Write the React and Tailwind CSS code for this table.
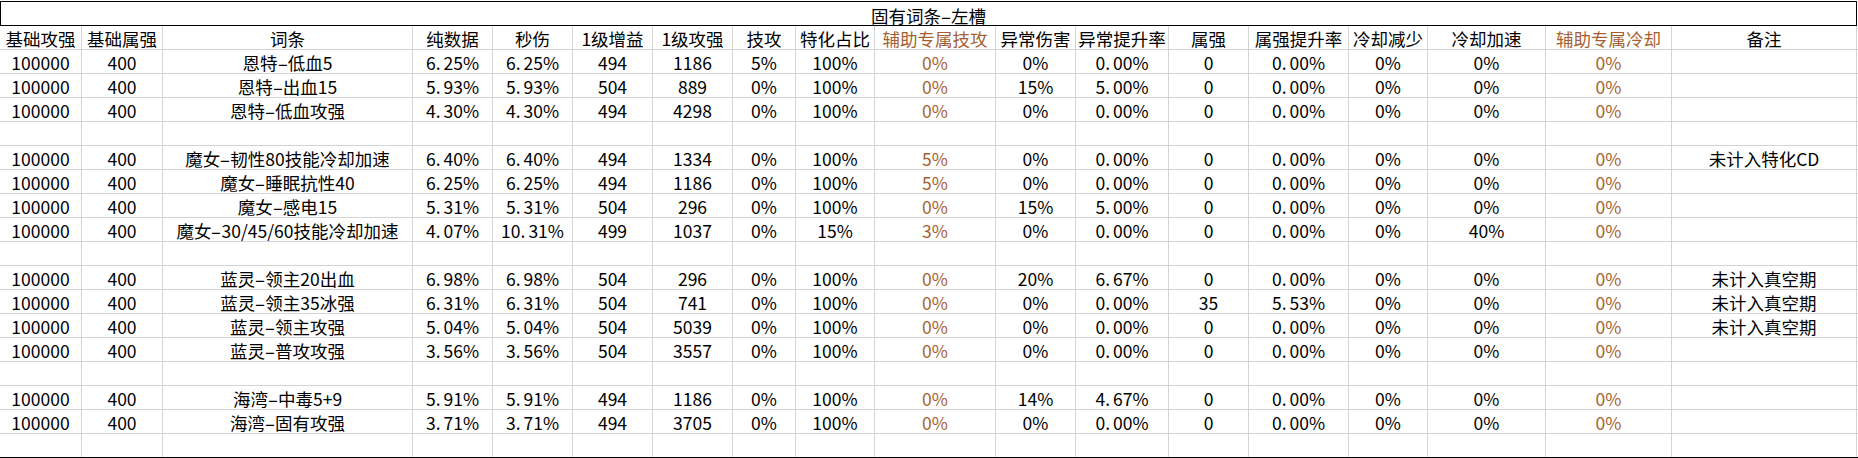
import React from "react";

const heads = [
  "基础攻强", "基础属强", "词条", "纯数据", "秒伤", "1级增益", "1级攻强", "技攻", "特化占比",
  "辅助专属技攻", "异常伤害", "异常提升率", "属强", "属强提升率", "冷却减少", "冷却加速", "辅助专属冷却", "备注",
];

// columns 9 and 16 are the brown "辅助专属" ones
const brown = [9, 16];

const rows = [
  ["恩特-低血5", "6.25%", "6.25%", "494", "1186", "5%", "100%", "0%", "0%", "0.00%", "0", "0.00%", "0%", "0%", "0%", ""],
  ["恩特-出血15", "5.93%", "5.93%", "504", "889", "0%", "100%", "0%", "15%", "5.00%", "0", "0.00%", "0%", "0%", "0%", ""],
  ["恩特-低血攻强", "4.30%", "4.30%", "494", "4298", "0%", "100%", "0%", "0%", "0.00%", "0", "0.00%", "0%", "0%", "0%", ""],
  null,
  ["魔女-韧性80技能冷却加速", "6.40%", "6.40%", "494", "1334", "0%", "100%", "5%", "0%", "0.00%", "0", "0.00%", "0%", "0%", "0%", "未计入特化CD"],
  ["魔女-睡眠抗性40", "6.25%", "6.25%", "494", "1186", "0%", "100%", "5%", "0%", "0.00%", "0", "0.00%", "0%", "0%", "0%", ""],
  ["魔女-感电15", "5.31%", "5.31%", "504", "296", "0%", "100%", "0%", "15%", "5.00%", "0", "0.00%", "0%", "0%", "0%", ""],
  ["魔女-30/45/60技能冷却加速", "4.07%", "10.31%", "499", "1037", "0%", "15%", "3%", "0%", "0.00%", "0", "0.00%", "0%", "40%", "0%", ""],
  null,
  ["蓝灵-领主20出血", "6.98%", "6.98%", "504", "296", "0%", "100%", "0%", "20%", "6.67%", "0", "0.00%", "0%", "0%", "0%", "未计入真空期"],
  ["蓝灵-领主35冰强", "6.31%", "6.31%", "504", "741", "0%", "100%", "0%", "0%", "0.00%", "35", "5.53%", "0%", "0%", "0%", "未计入真空期"],
  ["蓝灵-领主攻强", "5.04%", "5.04%", "504", "5039", "0%", "100%", "0%", "0%", "0.00%", "0", "0.00%", "0%", "0%", "0%", "未计入真空期"],
  ["蓝灵-普攻攻强", "3.56%", "3.56%", "504", "3557", "0%", "100%", "0%", "0%", "0.00%", "0", "0.00%", "0%", "0%", "0%", ""],
  null,
  ["海湾-中毒5+9", "5.91%", "5.91%", "494", "1186", "0%", "100%", "0%", "14%", "4.67%", "0", "0.00%", "0%", "0%", "0%", ""],
  ["海湾-固有攻强", "3.71%", "3.71%", "494", "3705", "0%", "100%", "0%", "0%", "0.00%", "0", "0.00%", "0%", "0%", "0%", ""],
  null,
];

// the sheet font leaves a gap after the decimal point and draws a wide dash
const Val = ({ v }) => {
  if (/^\d+\.\d+%$/.test(v)) {
    const [a, b] = v.split(".");
    return (
      <>
        {a}.<span className="ml-[3px]">{b}</span>
      </>
    );
  }
  if (v.includes("-")) {
    const [a, ...b] = v.split("-");
    return (
      <>
        {a}
        <span className="inline-block mx-[2px] scale-x-[1.8]">-</span>
        {b.join("-")}
      </>
    );
  }
  return v;
};

const Row = ({ cells, last }) => (
  <div
    className={`grid grid-cols-[82px_81px_250px_80px_80px_80px_80px_63px_79px_121px_80px_93px_80px_100px_79px_118px_126px_185px] h-[24px] border-b ${
      last ? "border-black" : "border-[#d4d4d4]"
    }`}
  >
    {cells.map((c, i) => (
      <div
        key={i}
        className={`flex items-center justify-center pt-[3px] border-r border-[#d4d4d4] whitespace-nowrap ${
          brown.includes(i) ? "text-[#a65f33]" : "text-black"
        }`}
      >
        <Val v={c} />
      </div>
    ))}
  </div>
);

export default function App() {
  return (
    <div className="bg-white w-[1858px] h-[458px] pt-px font-['Noto_Sans_CJK_SC',sans-serif] text-[17.5px] leading-none">
      {/* title */}
      <div className="w-[1857px] h-[25px] border border-black flex items-center justify-center pt-[4px] text-black">
        <Val v="固有词条-左槽" />
      </div>
      <Row cells={heads} />
      {rows.map((r, i) => (
        <Row
          key={i}
          last={i === rows.length - 1}
          cells={r ? ["100000", "400", ...r] : Array(18).fill("")}
        />
      ))}
    </div>
  );
}
